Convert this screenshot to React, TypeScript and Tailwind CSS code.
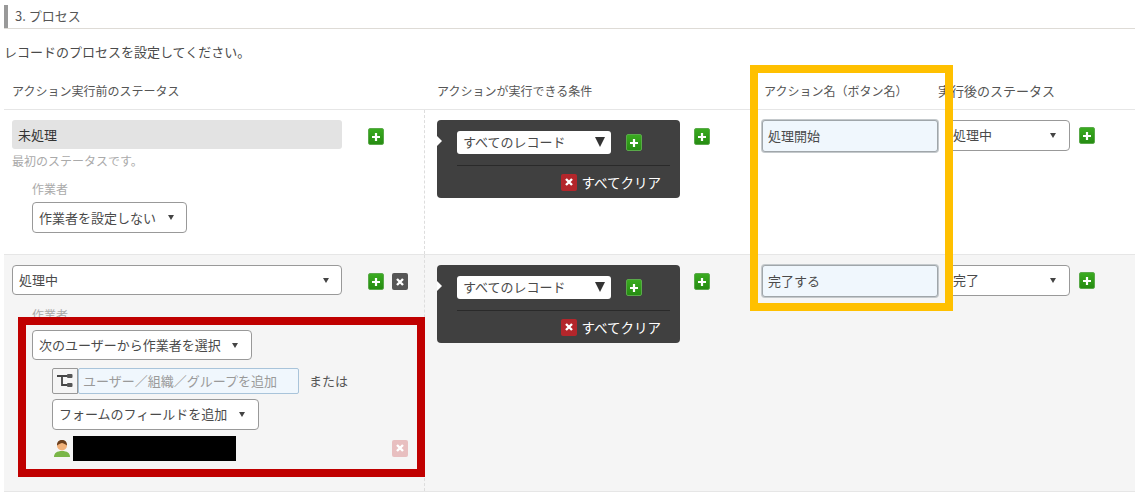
const fontStack = { fontFamily: '"Noto Sans CJK JP", "Noto Sans", sans-serif' };

const PlusButton = () => (
  <span className="flex h-[17px] w-[16px] items-center justify-center rounded-[2px] border border-[#5aa94a] bg-linear-to-b from-[#3aab20] to-[#268c12]">
    <svg width="10" height="10" viewBox="0 0 10 10">
      <path d="M5 1v8M1 5h8" stroke="#fff" strokeWidth="2.2" />
    </svg>
  </span>
);

const CrossButton = ({ className }: { className: string }) => (
  <span className={`flex h-[17px] w-[16px] items-center justify-center rounded-[2px] ${className}`}>
    <svg width="10" height="10" viewBox="0 0 10 10">
      <path d="M2 2l6 6M8 2l-6 6" stroke="#fff" strokeWidth="2.4" />
    </svg>
  </span>
);

const Caret = () => <span className="h-0 w-0 border-x-[3.5px] border-t-[5px] border-x-transparent border-t-[#444]" />;

const SelectBox = ({ label, className }: { label: string; className: string }) => (
  <div
    className={`flex items-center justify-between rounded-[4px] border border-[#999] bg-white pl-[6px] text-[13px] text-[#4a4a4a] ${className}`}
  >
    <span className="whitespace-nowrap">{label}</span>
    <Caret />
  </div>
);

const Condition = () => (
  <div className="relative flex h-[78px] w-[243px] flex-col rounded-[4px] bg-[#404040] pl-[20px] pr-[10px] pt-[11px]">
    <span className="absolute left-0 top-[16px] h-0 w-0 border-y-[5px] border-l-[5px] border-y-transparent border-l-white" />
    <div className="flex items-center">
      <div className="flex h-[23px] w-[154px] items-center justify-between rounded-[3px] bg-white pb-[2px] pl-[6px] pr-[6px] text-[13px] text-[#4a4a4a]">
        <span>すべてのレコード</span>
        <span className="h-0 w-0 border-x-[5.5px] border-t-[10px] border-x-transparent border-t-[#333]" />
      </div>
      <span className="ml-[15px]">
        <PlusButton />
      </span>
    </div>
    <div className="mt-[11px] border-t border-[#2a2a2a]" />
    <div className="mt-[6px] flex items-center justify-end gap-[4px] pr-[9px] text-[13.5px] text-white">
      <CrossButton className="bg-[#b3262b]" />
      <span>すべてクリア</span>
    </div>
  </div>
);

const ActionInput = ({ value }: { value: string }) => (
  <div className="flex h-[32px] w-[178px] items-center rounded-[3px] border border-[#a0a6aa] bg-[#f0f7fd] pb-[1px] pl-[5px] text-[13px] text-[#4a4a4a] shadow-[0_0_0_1px_#c4c9cc]">
    {value}
  </div>
);

const ActionCells = ({ name, next }: { name: string; next: string }) => (
  <>
    <div className="flex items-start pl-[12px] pt-[10px]">
      <ActionInput value={name} />
    </div>
    <div className="flex items-start pl-[8px] pt-[10px]">
      <SelectBox label={next} className="h-[31px] w-[124px] pb-[1px] pr-[13px]" />
      <span className="ml-[9px] mt-[7px]">
        <PlusButton />
      </span>
    </div>
  </>
);

const App = () => {
  return (
    <div className="relative h-[496px] w-[1140px] overflow-hidden bg-white pl-[4px] pr-[5px] pt-[5px]" style={fontStack}>
      <div className="flex h-[24px] items-center border-b border-[#dedbd6]">
        <span className="h-[23px] w-[4px] bg-[#999]" />
        <span className="ml-[7px] pb-[1px] text-[13px] text-[#555]">3. プロセス</span>
      </div>
      <p className="mt-[13px] h-[19px] text-[13px] leading-[19px] text-[#4a4a4a]">レコードのプロセスを設定してください。</p>

      <div className="mt-[12px] grid h-[37px] grid-cols-[421px_325px_184px_1fr] items-center border-b border-[#e6e6e6] text-[12px] text-[#555]">
        <span className="pl-[8px]">アクション実行前のステータス</span>
        <span className="pl-[12px]">アクションが実行できる条件</span>
        <span className="pl-[14px]">アクション名（ボタン名）</span>
        <span className="whitespace-nowrap pl-[4px] text-[13px]">実行後のステータス</span>
      </div>

      <div className="grid h-[144px] grid-cols-[421px_325px_188px_1fr]">
        <div className="border-r border-dashed border-[#ddd] pl-[8px] pt-[10px]">
          <div className="flex items-start">
            <div className="flex h-[29px] w-[330px] items-center rounded-[3px] bg-[#e3e3e3] pl-[6px] text-[13px] text-[#333]">未処理</div>
            <span className="ml-[26px] mt-[8px]">
              <PlusButton />
            </span>
          </div>
          <p className="mt-[3px] text-[12px] leading-[18px] text-[#aaa]">最初のステータスです。</p>
          <p className="ml-[20px] mt-[10px] text-[12px] leading-[18px] text-[#aaa]">作業者</p>
          <SelectBox label="作業者を設定しない" className="ml-[20px] mt-[4px] h-[31px] w-[155px] pr-[12px]" />
        </div>
        <div className="flex items-start pl-[12px] pt-[10px]">
          <Condition />
          <span className="ml-[14px] mt-[8px]">
            <PlusButton />
          </span>
        </div>
        <ActionCells name="処理開始" next="処理中" />
      </div>

      <div className="grid h-[238px] grid-cols-[421px_325px_188px_1fr] border-y border-[#e6e6e6] bg-[#f5f5f5]">
        <div className="border-r border-dashed border-[#ddd] pl-[8px] pt-[10px]">
          <div className="flex items-start">
            <SelectBox label="処理中" className="h-[30px] w-[330px] pr-[12px]" />
            <span className="ml-[26px] mt-[8px]">
              <PlusButton />
            </span>
            <span className="ml-[8px] mt-[8px]">
              <CrossButton className="bg-[#555]" />
            </span>
          </div>
          <p className="ml-[20px] mt-[11px] text-[12px] leading-[18px] text-[#aaa]">作業者</p>
          <SelectBox label="次のユーザーから作業者を選択" className="ml-[20px] mt-[6px] h-[30px] w-[220px] pr-[13px]" />
          <div className="ml-[40px] mt-[8px] flex h-[26px] items-center">
            <span className="flex h-[26px] w-[26px] items-center justify-center rounded-l-[2px] border border-[#999] bg-[#f5f5f5]">
              <svg width="18" height="16" viewBox="0 0 18 16" fill="none">
                <path d="M1 3h10M6 3v9h5" stroke="#444" strokeWidth="1.8" />
                <rect x="11" y="1" width="5.500" height="4" rx="1" fill="#555" />
                <rect x="11" y="10" width="5.500" height="4" rx="1" fill="#555" />
              </svg>
            </span>
            <div className="flex h-[26px] w-[221px] items-center rounded-[2px] border border-[#a9c4da] bg-[#f0f7fd] pl-[4px] text-[13px] text-[#9a9a9a]">
              ユーザー／組織／グループを追加
            </div>
            <span className="ml-[10px] text-[13px] text-[#555]">または</span>
          </div>
          <SelectBox label="フォームのフィールドを追加" className="ml-[40px] mt-[5px] h-[31px] w-[207px] pb-[1px] pr-[13px]" />
          <div className="ml-[42px] mt-[5px] flex h-[26px] items-center">
            <svg width="16" height="18" viewBox="0 0 16 18">
              <path d="M0 18c0-4 3-6 8-6s8 2 8 6z" fill="#7ab648" />
              <circle cx="8" cy="6.500" r="5" fill="#f2b27a" />
              <path d="M3 6.500C3 2.500 5 1 8 1s5 1.500 5 5.500C11 5 9 4 8 4S5 5 3 6.500z" fill="#6b3f1d" />
            </svg>
            <span className="ml-[3px] h-[25px] w-[163px] bg-black" />
            <span className="ml-[156px]">
              <CrossButton className="bg-[#e8bfc0]" />
            </span>
          </div>
        </div>
        <div className="flex items-start pl-[12px] pt-[10px]">
          <Condition />
          <span className="ml-[14px] mt-[8px]">
            <PlusButton />
          </span>
        </div>
        <ActionCells name="完了する" next="完了" />
      </div>

      <div className="pointer-events-none absolute left-[750px] top-[65px] h-[246px] w-[203px] border-[8px] border-[#ffc000]" />
      <div className="pointer-events-none absolute left-[18px] top-[317px] h-[160px] w-[407px] border-[8px] border-[#c00000]" />
    </div>
  );
};

export default App;
